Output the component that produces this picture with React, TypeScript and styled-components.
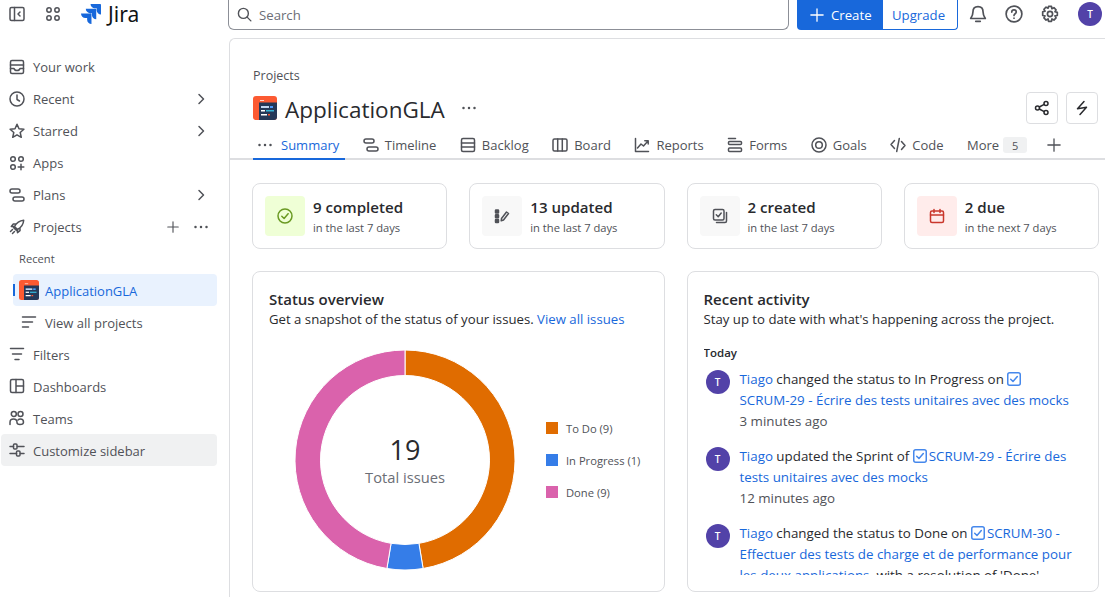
import { ReactNode } from 'react';
import styled, { createGlobalStyle } from 'styled-components';

const FONT = '"Open Sans", "Noto Sans", sans-serif';
const TEXT = '#292a2e';
const MUTED = '#505258';
const BLUE = '#1868db';
const LINE = '#dddee1';

const GlobalStyle = createGlobalStyle`
  html, body { margin: 0; padding: 0; background: #fff; }
  body { font-family: ${FONT}; font-size: 13.2px; color: ${TEXT}; }
  * { box-sizing: border-box; }
`;

const Svg = ({ size = 16, color = MUTED, children }: { size?: number; color?: string; children: ReactNode }) => (
  <svg width={size} height={size} viewBox="0 0 16 16" fill="none" stroke={color} strokeWidth={1.5} strokeLinecap="round" strokeLinejoin="round" style={{ flexShrink: 0, display: 'block' }}>
    {children}
  </svg>
);

const icons: Record<string, ReactNode> = {
  collapse: <><rect x="1" y="1.5" width="14" height="13" rx="1.5" /><path d="M5.5 1.5v13M11 6l-2 2 2 2" /></>,
  grid: <><circle cx="4" cy="4" r="2.2" /><circle cx="12" cy="4" r="2.2" /><circle cx="4" cy="12" r="2.2" /><circle cx="12" cy="12" r="2.2" /></>,
  inbox: <><rect x="1.5" y="1.5" width="13" height="13" rx="1.5" /><path d="M1.5 6h13M1.5 9.5H5c.3 1.2 1.4 2 3 2s2.7-.8 3-2h3.5" /></>,
  clock: <><circle cx="8" cy="8" r="7" /><path d="M8 4v4.5l2.5 1.5" /></>,
  star: <path d="M8 1.3l2 4.5 4.9.5-3.7 3.2 1.1 4.8L8 11.8l-4.3 2.5 1.1-4.8-3.7-3.2L6 5.8z" />,
  apps: <><circle cx="4" cy="4" r="2.3" /><circle cx="12" cy="4" r="2.3" /><circle cx="4" cy="12" r="2.3" /><path d="M12 9.2v5.6M9.2 12h5.6" /></>,
  plans: <><rect x="1" y="2" width="10" height="4" rx="2" /><rect x="4" y="10" width="11" height="4" rx="2" /></>,
  rocket: <path d="M5.5 7.5C7.5 3.8 10.5 1.7 14.7 1.3c-.3 4.2-2.4 7.2-6.2 9.2zM5.5 7.5H2.3l2-2.5h3M8.5 10.5v3.200l2.500-2v-3M5.500 7.500l-1 1 3 3 1-1M3.500 10.500l-2 2M5.500 12.500l-2 2" />,
  lines: <path d="M1.5 3h13M1.5 8h10M1.5 13h6" />,
  filter: <path d="M1.5 2.5h13M3.5 8h9M6 13.5h4" />,
  board: <><rect x="1.5" y="1.5" width="13" height="13" rx="1.5" /><path d="M7 1.5v13M7 8h7.5" /></>,
  teams: <><circle cx="4.8" cy="4" r="2.5" /><circle cx="11.5" cy="4" r="2.5" /><path d="M1 14.5v-2.3c0-2 1.5-3.2 3.5-3.2S8 10.5 8 12.5s1.3 2 3 2c2 0 3.5-.5 3.5-2.3 0-1.9-1.5-3.2-3-3.2-1 0-2 .4-2.5 1" /></>,
  sliders: <><path d="M1 4.5h3.5M8.5 4.5H15M1 11.5h6.5M11.5 11.5H15" /><rect x="4.5" y="2" width="3.5" height="5" rx="1" /><rect x="7.5" y="9" width="3.5" height="5" rx="1" /></>,
  chevron: <path d="M6 3.5L10.5 8 6 12.5" />,
  plus: <path d="M8 1v14M1 8h14" />,
  search: <><circle cx="6.8" cy="6.8" r="5.3" /><path d="M10.8 10.8l4 4" /></>,
  bell: <path d="M8 1.5c-2.8 0-4.500 2-4.500 4.700 0 3-1.500 4.800-2 5.800h13c-.5-1-2-2.800-2-5.800C12.500 3.500 10.800 1.500 8 1.500zM6 14.500h4" />,
  help: <><circle cx="8" cy="8" r="7" /><path d="M6 6.300C6 5 7 4.300 8 4.300s2 .8 2 1.900c0 1.600-2 1.500-2 3.100" /><path d="M8 11.700v.1" /></>,
  gear: <><circle cx="8" cy="8" r="2.3" /><path d="M6.700 1.300h2.600l.4 2 1.800-.9 1.900 1.900-1 1.700 2.100.5v2.800l-2.100.4 1 1.800-1.900 1.900-1.800-1-.4 2.200H6.700l-.4-2.200-1.800 1-1.900-1.900 1-1.800-2.100-.4V6l2.100-.5-1-1.700 1.900-1.900 1.800.9z" /></>,
  share: <><circle cx="3.5" cy="8" r="2" /><circle cx="12" cy="3.5" r="2" /><circle cx="12" cy="12.5" r="2" /><path d="M5.3 7l4.900-2.600M5.300 9l4.900 2.600" /></>,
  bolt: <path d="M10 1.500L3.500 8.800l9-1.600L6 14.500" />,
  backlog: <><rect x="1.5" y="1.5" width="13" height="13" rx="1.5" /><path d="M1.5 6h13M1.5 10h13" /></>,
  columns: <><rect x="1" y="2" width="14" height="12" rx="1.5" /><path d="M5.7 2v12M10.3 2v12" /></>,
  reports: <path d="M1.5 1.5v13h13M3.5 11L7 7l2.500 2L14 4M10.800 3.800h3.400V7" />,
  forms: <><path d="M1.5 1.5h7" /><rect x="1.5" y="4.5" width="13" height="3" rx="1" /><rect x="1.5" y="11" width="13" height="3.5" rx="1" /></>,
  goals: <><circle cx="8" cy="8" r="7" /><circle cx="8" cy="8" r="3.3" /></>,
  code: <path d="M4.500 3.500L1 7.500l3.500 4M11.500 4.500L15 8.500l-3.500 4M9.300 1.500l-2.600 13" />,
  check: <><circle cx="8" cy="8" r="7" /><path d="M4.800 8.300l2.300 2.200 4-4.800" /></>,
  edit: <><rect x="1.5" y="2" width="3" height="3" rx=".5" fill={MUTED} /><rect x="1.5" y="6.8" width="3" height="3" rx=".5" fill={MUTED} /><rect x="1.5" y="11.5" width="3" height="3" rx=".5" fill={MUTED} /><path d="M7.500 10.500l5-6.500 2 1.500-5 6.500-2.300.8z" /></>,
  created: <><rect x="1.5" y="1.5" width="10.5" height="10.5" rx="1.5" /><path d="M4.300 6.800l1.900 1.900 3-3.700M14.500 4.500V13a1.500 1.500 0 0 1-1.500 1.500H4.500" /></>,
  calendar: <><rect x="1.5" y="3" width="13" height="11.5" rx="1.5" /><path d="M1.500 7h13M5 1.500v3M11 1.500v3" /></>,
};

const Icon = ({ name, size, color }: { name: string; size?: number; color?: string }) => (
  <Svg size={size} color={color}>{icons[name]}</Svg>
);

const JiraMark = () => (
  <svg width="20" height="20" viewBox="0 0 24 24" fill={BLUE} style={{ display: 'block' }}>
    <path d="M11.571 11.513H0a5.218 5.218 0 0 0 5.232 5.215h2.130v2.057A5.215 5.215 0 0 0 12.575 24V12.518a1.005 1.005 0 0 0-1.005-1.005zm5.723-5.756H5.736a5.215 5.215 0 0 0 5.215 5.214h2.129v2.058a5.218 5.218 0 0 0 5.215 5.214V6.758a1.001 1.001 0 0 0-1.001-1.001zM23.013 0H11.455a5.215 5.215 0 0 0 5.215 5.215h2.129v2.057A5.215 5.215 0 0 0 24 12.483V1.005A1.001 1.001 0 0 0 23.013 0Z" />
  </svg>
);

const ProjectIcon = ({ size }: { size: number }) => (
  <svg width={size} height={size} viewBox="0 0 24 24" style={{ display: 'block', flexShrink: 0 }}>
    <rect width="24" height="24" rx="3" fill="#fc5a32" />
    <path d="M6 6.5h18V21a3 3 0 0 1-3 3H6z" fill="#253858" />
    <rect x="7" y="4" width="4" height="1" fill="#ffd5c9" />
    <rect x="8" y="10" width="8" height="2" fill="#c1d5f0" />
    <rect x="17" y="10" width="3" height="2" fill="#4c9aff" />
    <rect x="8" y="14" width="4" height="1.5" fill="#fff" />
    <rect x="13" y="14" width="8" height="1.5" fill="#36b3d6" />
    <rect x="8" y="18" width="6" height="1.5" fill="#fff" />
    <rect x="15" y="18" width="2" height="1.5" fill="#ff5630" />
  </svg>
);

const Dots = () => (
  <svg width="16" height="16" viewBox="0 0 16 16" fill={MUTED} style={{ display: 'block', flexShrink: 0 }}>
    <circle cx="2.5" cy="8" r="1.25" />
    <circle cx="8" cy="8" r="1.25" />
    <circle cx="13.5" cy="8" r="1.25" />
  </svg>
);

const polar = (r: number, a: number) => {
  const t = (a - 90) * (Math.PI / 180);
  return `${110 + r * Math.cos(t)} ${110 + r * Math.sin(t)}`;
};

const slice = (from: number, to: number) => {
  const large = to - from > 180 ? 1 : 0;
  return `M${polar(110, from)}A110 110 0 ${large} 1 ${polar(110, to)}L${polar(84.5, to)}A84.5 84.5 0 ${large} 0 ${polar(84.5, from)}Z`;
};

const statuses = [
  { label: 'To Do (9)', count: 9, color: '#e06c00' },
  { label: 'In Progress (1)', count: 1, color: '#357de8' },
  { label: 'Done (9)', count: 9, color: '#da62ac' },
];

const Donut = () => {
  let at = 0;
  return (
    <svg width="220" height="220" viewBox="0 0 220 220" style={{ display: 'block' }}>
      {statuses.map((s) => {
        const from = at;
        at += (s.count / 19) * 360;
        return <path key={s.label} d={slice(from, at)} fill={s.color} stroke="#fff" strokeWidth="1" />;
      })}
    </svg>
  );
};

const navTop = [
  { icon: 'inbox', label: 'Your work' },
  { icon: 'clock', label: 'Recent', more: true },
  { icon: 'star', label: 'Starred', more: true },
  { icon: 'apps', label: 'Apps' },
  { icon: 'plans', label: 'Plans', more: true },
];

const navBottom = [
  { icon: 'filter', label: 'Filters' },
  { icon: 'board', label: 'Dashboards' },
  { icon: 'teams', label: 'Teams' },
];

const tabs = [
  { icon: 'plans', label: 'Timeline' },
  { icon: 'backlog', label: 'Backlog' },
  { icon: 'columns', label: 'Board' },
  { icon: 'reports', label: 'Reports' },
  { icon: 'forms', label: 'Forms' },
  { icon: 'goals', label: 'Goals' },
  { icon: 'code', label: 'Code' },
];

const stats = [
  { icon: 'check', color: '#6a9a23', bg: '#efffd6', title: '9 completed', sub: 'in the last 7 days' },
  { icon: 'edit', color: MUTED, bg: '#f8f8f8', title: '13 updated', sub: 'in the last 7 days' },
  { icon: 'created', color: MUTED, bg: '#f8f8f8', title: '2 created', sub: 'in the last 7 days' },
  { icon: 'calendar', color: '#c9372c', bg: '#ffeceb', title: '2 due', sub: 'in the next 7 days' },
];

const IssueCheck = () => (
  <IssueIcon>
    <svg width="14" height="14" viewBox="0 0 14 14" fill="none" stroke="#4688ec" strokeWidth="1.5" strokeLinecap="round" strokeLinejoin="round">
      <rect x=".75" y=".75" width="12.5" height="12.5" rx="2" />
      <path d="M3.7 7.2L6 9.5l4.300-5" />
    </svg>
  </IssueIcon>
);

export default function App() {
  return (
    <Page>
      <GlobalStyle />
      <TopBar>
        <Brand>
          <Icon name="collapse" />
          <Icon name="grid" />
          <Logo>
            <JiraMark />
            <LogoText>Jira</LogoText>
          </Logo>
        </Brand>
        <SearchBox>
          <Icon name="search" size={15} />
          <span>Search</span>
        </SearchBox>
        <ButtonGroup>
          <CreateButton>
            <Icon name="plus" color="#fff" size={14} />
            Create
          </CreateButton>
          <UpgradeButton>Upgrade</UpgradeButton>
        </ButtonGroup>
        <TopIcons>
          <Icon name="bell" size={18} />
          <Icon name="help" size={18} />
          <Icon name="gear" size={18} />
        </TopIcons>
        <Avatar $top>T</Avatar>
      </TopBar>
      <Body>
        <Sidebar>
          {navTop.map((item) => (
            <NavRow key={item.label}>
              <Icon name={item.icon} />
              <NavLabel>{item.label}</NavLabel>
              {item.more && <Icon name="chevron" />}
            </NavRow>
          ))}
          <NavRow>
            <Icon name="rocket" />
            <NavLabel>Projects</NavLabel>
            <NavActions>
              <Icon name="plus" size={12} />
              <Dots />
            </NavActions>
          </NavRow>
          <SectionLabel>Recent</SectionLabel>
          <ProjectRow $active>
            <ProjectIcon size={20} />
            <NavLabel $low>ApplicationGLA</NavLabel>
          </ProjectRow>
          <ProjectRow>
            <ProjectLines><Icon name="lines" /></ProjectLines>
            <NavLabel $low>View all projects</NavLabel>
          </ProjectRow>
          {navBottom.map((item) => (
            <NavRow key={item.label}>
              <Icon name={item.icon} />
              <NavLabel $low>{item.label}</NavLabel>
            </NavRow>
          ))}
          <NavRow $shaded>
            <Icon name="sliders" />
            <NavLabel $low>Customize sidebar</NavLabel>
          </NavRow>
        </Sidebar>
        <Main>
          <Crumb>Projects</Crumb>
          <TitleRow>
            <ProjectIcon size={24} />
            <Title>ApplicationGLA</Title>
            <Dots />
            <TitleActions>
              <SquareButton><Icon name="share" color={TEXT} /></SquareButton>
              <SquareButton><Icon name="bolt" color={TEXT} /></SquareButton>
            </TitleActions>
          </TitleRow>
          <TabBar>
            <Tab $active>
              <Dots />
              Summary
            </Tab>
            {tabs.map((t) => (
              <Tab key={t.label}>
                <Icon name={t.icon} />
                {t.label}
              </Tab>
            ))}
            <Tab>
              More
              <CountBadge>5</CountBadge>
            </Tab>
            <AddTab><Icon name="plus" size={14} /></AddTab>
          </TabBar>
          <StatGrid>
            {stats.map((s) => (
              <StatCard key={s.title}>
                <StatIcon $bg={s.bg}><Icon name={s.icon} color={s.color} /></StatIcon>
                <StatBody>
                  <StatTitle>{s.title}</StatTitle>
                  <StatSub>{s.sub}</StatSub>
                </StatBody>
              </StatCard>
            ))}
          </StatGrid>
          <PanelGrid>
            <Panel>
              <PanelTitle>Status overview</PanelTitle>
              <PanelSub>
                Get a snapshot of the status of your issues. <Link>View all issues</Link>
              </PanelSub>
              <ChartRow>
                <DonutWrap>
                  <Donut />
                  <DonutCenter>
                    <DonutValue>19</DonutValue>
                    <DonutCaption>Total issues</DonutCaption>
                  </DonutCenter>
                </DonutWrap>
                <Legend>
                  {statuses.map((s) => (
                    <LegendRow key={s.label}>
                      <Swatch $color={s.color} />
                      {s.label}
                    </LegendRow>
                  ))}
                </Legend>
              </ChartRow>
            </Panel>
            <Panel>
              <PanelTitle>Recent activity</PanelTitle>
              <PanelSub>Stay up to date with what's happening across the project.</PanelSub>
              <Feed>
                <FeedDay>Today</FeedDay>
                <FeedItem>
                  <Avatar>T</Avatar>
                  <FeedText>
                    <Link>Tiago</Link> changed the status to In Progress on <IssueCheck />
                    <Link><IssueKey>SCRUM-29</IssueKey> - Écrire des tests unitaires avec des mocks</Link>
                    <FeedTime>3 minutes ago</FeedTime>
                  </FeedText>
                </FeedItem>
                <FeedItem>
                  <Avatar>T</Avatar>
                  <FeedText>
                    <Link>Tiago</Link> updated the Sprint of <IssueCheck />
                    <Link><IssueKey>SCRUM-29</IssueKey> - Écrire des tests unitaires avec des mocks</Link>
                    <FeedTime>12 minutes ago</FeedTime>
                  </FeedText>
                </FeedItem>
                <FeedItem>
                  <Avatar>T</Avatar>
                  <FeedText>
                    <Link>Tiago</Link> changed the status to Done on <IssueCheck />
                    <Link><IssueKey>SCRUM-30</IssueKey> - Effectuer des tests de charge et de performance pour les deux applications</Link>
                    , with a resolution of 'Done'
                  </FeedText>
                </FeedItem>
              </Feed>
            </Panel>
          </PanelGrid>
        </Main>
      </Body>
    </Page>
  );
}

const Page = styled.div`
  width: 1105px;
  height: 597px;
  overflow: hidden;
  display: flex;
  flex-direction: column;
`;

const TopBar = styled.header`
  height: 38px;
  flex-shrink: 0;
  display: flex;
  align-items: flex-start;
`;

const Brand = styled.div`
  width: 228px;
  height: 30px;
  padding: 0 0 2px 9px;
  display: flex;
  align-items: center;
  gap: 20px;
`;

const Logo = styled.div`
  display: flex;
  align-items: center;
  gap: 7px;
`;

const LogoText = styled.span`
  font-family: 'Noto Sans', sans-serif;
  font-size: 21px;
  color: #101214;
`;

const SearchBox = styled.div`
  width: 561px;
  height: 30px;
  padding: 0 8px;
  display: flex;
  align-items: center;
  gap: 7px;
  border: 1px solid #8c8f97;
  border-top: none;
  border-radius: 0 0 6px 6px;
  color: #6b6e76;
`;

const ButtonGroup = styled.div`
  margin-left: 8px;
  display: flex;
  height: 30px;
`;

const CreateButton = styled.div`
  width: 86px;
  padding-left: 13px;
  display: flex;
  align-items: center;
  gap: 7px;
  background: ${BLUE};
  color: #fff;
  border-radius: 0 0 0 4px;
`;

const UpgradeButton = styled.div`
  width: 75px;
  padding-left: 9px;
  display: flex;
  align-items: center;
  color: ${BLUE};
  border: 1px solid ${BLUE};
  border-left: none;
  border-top: none;
  border-radius: 0 0 4px 0;
`;

const TopIcons = styled.div`
  margin-left: 11px;
  height: 28px;
  display: flex;
  align-items: center;
  gap: 18px;
`;

const Avatar = styled.div<{ $top?: boolean }>`
  width: 24px;
  height: 24px;
  margin: ${({ $top }) => ($top ? '2px 0 0 19px' : '0')};
  flex-shrink: 0;
  display: flex;
  align-items: center;
  justify-content: center;
  border-radius: 50%;
  background: #5242a8;
  color: #fff;
  font-size: 10px;
  font-weight: 600;
`;

const Body = styled.div`
  flex: 1;
  min-height: 0;
  display: flex;
`;

const Sidebar = styled.nav`
  width: 229px;
  flex-shrink: 0;
  padding: 13px 12px 0 1px;
  font-size: 13px;
`;

const NavRow = styled.div<{ $shaded?: boolean }>`
  height: 32px;
  padding: 0 8px;
  display: flex;
  align-items: center;
  gap: 8px;
  color: ${MUTED};
  border-radius: 4px;
  background: ${({ $shaded }) => ($shaded ? '#f0f1f2' : 'transparent')};
`;

const NavLabel = styled.span<{ $low?: boolean }>`
  flex: 1;
  padding-top: ${({ $low }) => ($low ? '2px' : '0')};
`;

const NavActions = styled.div`
  display: flex;
  align-items: center;
  gap: 14px;
`;

const SectionLabel = styled.div`
  height: 31px;
  padding-left: 18px;
  display: flex;
  align-items: center;
  font-size: 11.2px;
  font-weight: 500;
  color: ${MUTED};
`;

const ProjectRow = styled.div<{ $active?: boolean }>`
  position: relative;
  height: 32px;
  margin-left: 12px;
  padding-left: 6px;
  display: flex;
  align-items: center;
  gap: 6px;
  border-radius: 4px;
  color: ${({ $active }) => ($active ? BLUE : MUTED)};
  background: ${({ $active }) => ($active ? '#e9f2fe' : 'transparent')};

  &::before {
    content: '';
    display: ${({ $active }) => ($active ? 'block' : 'none')};
    position: absolute;
    left: 0;
    top: 10px;
    width: 2px;
    height: 12px;
    background: ${BLUE};
  }
`;

const ProjectLines = styled.div`
  width: 20px;
  padding-left: 2px;
`;

const Main = styled.main`
  flex: 1;
  min-width: 0;
  padding: 27px 6px 0 22px;
  border-top: 1px solid ${LINE};
  border-left: 1px solid ${LINE};
  border-top-left-radius: 6px;
`;

const Crumb = styled.div`
  height: 19px;
  padding-left: 1px;
  line-height: 20px;
  font-size: 12.5px;
  color: ${MUTED};
`;

const TitleRow = styled.div`
  height: 32px;
  margin-top: 7px;
  padding-left: 1px;
  display: flex;
  align-items: center;
`;

const Title = styled.h1`
  margin: 0 16px 0 8px;
  padding-top: 2px;
  font-size: 22.5px;
  font-weight: 400;
  color: ${TEXT};
`;

const TitleActions = styled.div`
  margin: 0 1px 0 auto;
  display: flex;
  gap: 8px;
`;

const SquareButton = styled.div`
  width: 32px;
  height: 32px;
  display: flex;
  align-items: center;
  justify-content: center;
  border: 1px solid ${LINE};
  border-radius: 4px;
`;

const TabBar = styled.div`
  height: 33px;
  margin: 3px -6px 0 -22px;
  padding-left: 23px;
  display: flex;
  gap: 13.5px;
  font-size: 13px;
  border-bottom: 2px solid ${LINE};
`;

const Tab = styled.div<{ $active?: boolean }>`
  position: relative;
  height: 33px;
  padding: 3px 6px 0 4px;
  display: flex;
  align-items: center;
  gap: ${({ $active }) => ($active ? '8px' : '6px')};
  color: ${({ $active }) => ($active ? BLUE : MUTED)};

  &::after {
    content: '';
    display: ${({ $active }) => ($active ? 'block' : 'none')};
    position: absolute;
    left: 0;
    right: 0;
    bottom: 0;
    height: 2px;
    background: ${BLUE};
  }
`;

const AddTab = styled.div`
  height: 33px;
  padding-top: 3px;
  display: flex;
  align-items: center;
`;

const CountBadge = styled.span`
  width: 24px;
  height: 16px;
  margin-left: -2px;
  display: flex;
  align-items: center;
  justify-content: center;
  font-size: 11px;
  border-radius: 3px;
  background: #f0f1f2;
  color: ${MUTED};
`;

const StatGrid = styled.div`
  margin-top: 23px;
  display: grid;
  grid-template-columns: repeat(4, 1fr);
  gap: 22px;
`;

const StatCard = styled.div`
  height: 66px;
  padding: 12px;
  display: flex;
  align-items: center;
  gap: 8px;
  border: 1px solid ${LINE};
  border-radius: 8px;
`;

const StatIcon = styled.div<{ $bg: string }>`
  width: 40px;
  height: 40px;
  display: flex;
  align-items: center;
  justify-content: center;
  border-radius: 4px;
  background: ${({ $bg }) => $bg};
`;

const StatBody = styled.div`
  padding-top: 2px;
`;

const StatTitle = styled.div`
  height: 22px;
  line-height: 20px;
  font-size: 15.1px;
  font-weight: 600;
  color: ${TEXT};
`;

const StatSub = styled.div`
  height: 18px;
  line-height: 18px;
  font-size: 11.2px;
  color: ${MUTED};
`;

const PanelGrid = styled.div`
  margin-top: 22px;
  display: grid;
  grid-template-columns: repeat(2, 1fr);
  gap: 22px;
`;

const Panel = styled.section`
  height: 321px;
  padding: 17px 16px 16px;
  display: flex;
  flex-direction: column;
  border: 1px solid ${LINE};
  border-radius: 8px;
`;

const PanelTitle = styled.h2`
  margin: 0;
  height: 21px;
  line-height: 20px;
  font-size: 15px;
  font-weight: 600;
  color: ${TEXT};
`;

const PanelSub = styled.div`
  height: 18px;
  line-height: 18px;
  color: ${TEXT};
`;

const Link = styled.span`
  color: ${BLUE};
`;

const IssueKey = styled.span`
  white-space: nowrap;
`;

const ChartRow = styled.div`
  margin: 22px 0 0 26px;
  display: flex;
  align-items: center;
`;

const DonutWrap = styled.div`
  position: relative;
  width: 220px;
  height: 220px;
`;

const DonutCenter = styled.div`
  position: absolute;
  inset: 0;
  display: flex;
  flex-direction: column;
  align-items: center;
  justify-content: center;
`;

const DonutValue = styled.div`
  height: 34px;
  line-height: 36px;
  font-size: 27px;
  color: ${TEXT};
`;

const DonutCaption = styled.div`
  line-height: 22px;
  font-size: 14.7px;
  color: #6b6e76;
`;

const Legend = styled.div`
  margin-left: 31px;
  display: flex;
  flex-direction: column;
`;

const LegendRow = styled.div`
  height: 32px;
  display: flex;
  align-items: center;
  gap: 8px;
  font-size: 11.2px;
  color: ${MUTED};
`;

const Swatch = styled.span<{ $color: string }>`
  width: 12px;
  height: 12px;
  background: ${({ $color }) => $color};
`;

const Feed = styled.div`
  margin-top: 16px;
  min-height: 0;
  flex: 1;
  overflow: hidden;
`;

const FeedDay = styled.div`
  height: 18px;
  line-height: 18px;
  font-size: 11.5px;
  font-weight: 600;
  color: ${TEXT};
`;

const FeedItem = styled.div`
  margin: 8px 0 15px 2px;
  display: flex;
  gap: 10px;
`;

const FeedText = styled.div`
  margin-top: -1px;
  line-height: 21px;
  font-size: 13.35px;
  color: ${TEXT};
`;

const FeedTime = styled.div`
  color: ${MUTED};
`;

const IssueIcon = styled.span`
  display: inline-block;
  height: 14px;
  line-height: 0;
  vertical-align: -2px;
  margin-right: 2px;
`;
